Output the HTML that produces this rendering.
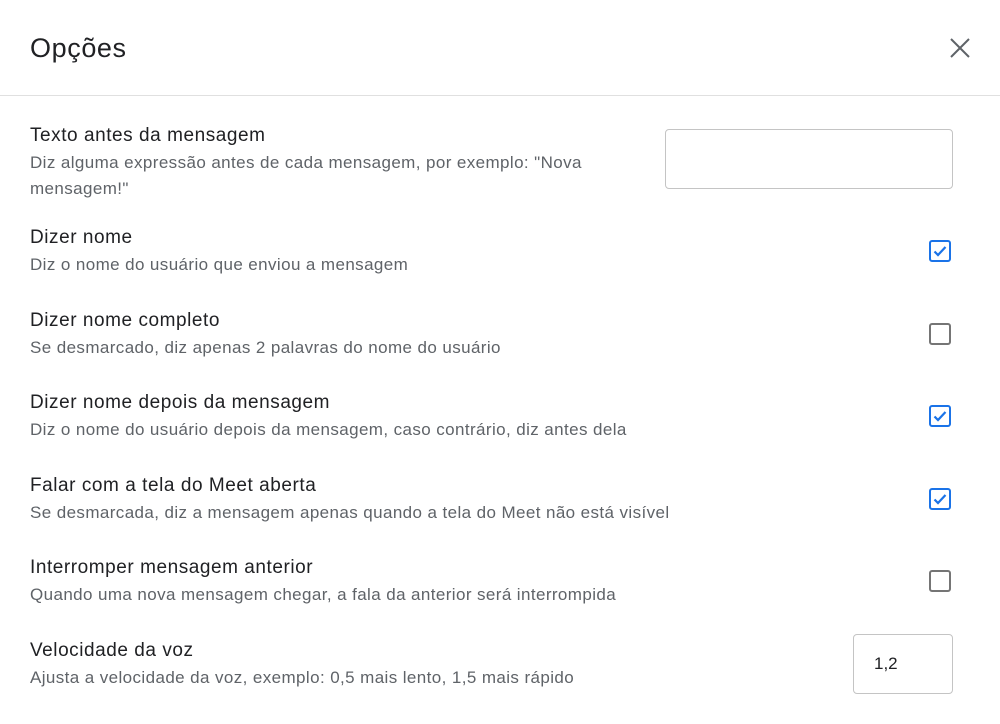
<!DOCTYPE html>
<html><head><meta charset="utf-8"><style>
*{margin:0;padding:0;box-sizing:border-box}
body{width:1000px;height:724px;background:#fff;font-family:"Liberation Sans",Arial,sans-serif;position:relative;overflow:hidden}
.t{position:absolute;left:30px;top:33px;font-size:27px;letter-spacing:0.6px;color:#202124}
.x{position:absolute;left:948px;top:36px}
.hr{position:absolute;left:0;top:95px;width:1000px;height:1px;background:#e0e0e0}
.r{position:absolute;left:30px}
.h{font-size:19px;letter-spacing:0.55px;color:#202124;line-height:24px}
.d{font-size:17px;letter-spacing:0.4px;color:#5f6368;line-height:26px;margin-top:2px}
.cb{position:absolute;left:929px;width:22px;height:22px;border:2px solid #757575;border-radius:3px}
.cb.on{border-color:#1a73e8}
.cb svg{position:absolute;left:1px;top:1px}
.in{position:absolute;border:1px solid #c4c4c4;border-radius:4px;font-size:17px;color:#202124;padding-left:20px;line-height:58px}
</style></head><body>
<div class="t">Opções</div>
<svg class="x" width="24" height="24" viewBox="0 0 24 24"><path d="M3 3L21 21M21 3L3 21" stroke="#5f6368" stroke-width="2"/></svg>
<div class="hr"></div>

<div class="r" style="top:124px"><div class="h">Texto antes da mensagem</div><div class="d">Diz alguma expressão antes de cada mensagem, por exemplo: "Nova<br>mensagem!"</div></div>
<div class="in" style="left:665px;top:129px;width:288px;height:60px"></div>

<div class="r" style="top:226px"><div class="h">Dizer nome</div><div class="d">Diz o nome do usuário que enviou a mensagem</div></div>
<div class="cb on" style="top:240px"><svg width="16" height="16" viewBox="0 0 16 16"><path d="M2.5 8.5L6 12L13.5 4" stroke="#1a73e8" stroke-width="2.2" fill="none"/></svg></div>

<div class="r" style="top:309px"><div class="h">Dizer nome completo</div><div class="d">Se desmarcado, diz apenas 2 palavras do nome do usuário</div></div>
<div class="cb" style="top:323px"></div>

<div class="r" style="top:391px"><div class="h">Dizer nome depois da mensagem</div><div class="d">Diz o nome do usuário depois da mensagem, caso contrário, diz antes dela</div></div>
<div class="cb on" style="top:405px"><svg width="16" height="16" viewBox="0 0 16 16"><path d="M2.5 8.5L6 12L13.5 4" stroke="#1a73e8" stroke-width="2.2" fill="none"/></svg></div>

<div class="r" style="top:474px"><div class="h">Falar com a tela do Meet aberta</div><div class="d">Se desmarcada, diz a mensagem apenas quando a tela do Meet não está visível</div></div>
<div class="cb on" style="top:488px"><svg width="16" height="16" viewBox="0 0 16 16"><path d="M2.5 8.5L6 12L13.5 4" stroke="#1a73e8" stroke-width="2.2" fill="none"/></svg></div>

<div class="r" style="top:556px"><div class="h">Interromper mensagem anterior</div><div class="d">Quando uma nova mensagem chegar, a fala da anterior será interrompida</div></div>
<div class="cb" style="top:570px"></div>

<div class="r" style="top:639px"><div class="h">Velocidade da voz</div><div class="d">Ajusta a velocidade da voz, exemplo: 0,5 mais lento, 1,5 mais rápido</div></div>
<div class="in" style="left:853px;top:634px;width:100px;height:60px">1,2</div>
</body></html>
